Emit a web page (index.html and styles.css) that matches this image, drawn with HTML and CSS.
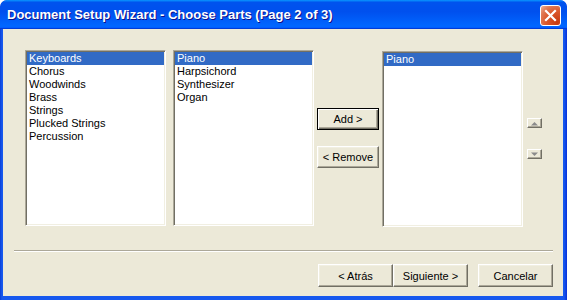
FILE: index.html
```html
<!DOCTYPE html>
<html lang="en">
<head>
  <meta charset="UTF-8">
  <meta name="viewport" content="width=device-width, initial-scale=1.0">
  <title>Document Setup Wizard</title>
  <link rel="stylesheet" href="styles.css">
</head>
<body>
  <div class="window">
    <!-- Title bar -->
    <div class="titlebar">
      <span class="title">Document Setup Wizard - Choose Parts (Page 2 of 3)</span>
      <button class="close-btn" aria-label="Close">
        <svg width="19" height="19" viewBox="0 0 19 19">
          <path d="M5 5 L14 14 M14 5 L5 14" stroke="#fff" stroke-width="2.2" stroke-linecap="square"/>
        </svg>
      </button>
    </div>

    <div class="client">
      <!-- Part pickers -->
      <div class="parts">
        <ul class="listbox">
          <li class="selected">Keyboards</li>
          <li>Chorus</li>
          <li>Woodwinds</li>
          <li>Brass</li>
          <li>Strings</li>
          <li>Plucked Strings</li>
          <li>Percussion</li>
        </ul>

        <ul class="listbox instruments">
          <li class="selected">Piano</li>
          <li>Harpsichord</li>
          <li>Synthesizer</li>
          <li>Organ</li>
        </ul>

        <div class="move-buttons">
          <button class="button default">Add &gt;</button>
          <button class="button remove-btn">&lt; Remove</button>
        </div>

        <ul class="listbox chosen">
          <li class="selected">Piano</li>
        </ul>

        <div class="order-buttons">
          <button class="arrow-btn" aria-label="Move up">
            <svg width="9" height="5" viewBox="0 0 9 5"><path d="M1 4.5 L4.5 1 L8 4.5 Z" fill="#8a8a8a"/></svg>
          </button>
          <button class="arrow-btn down-btn" aria-label="Move down">
            <svg width="9" height="5" viewBox="0 0 9 5"><path d="M1 0.5 L8 0.5 L4.5 4 Z" fill="#8a8a8a"/></svg>
          </button>
        </div>
      </div>

      <div class="separator"></div>

      <!-- Wizard navigation -->
      <div class="footer">
        <button class="button nav-btn">&lt; Atrás</button>
        <button class="button nav-btn">Siguiente &gt;</button>
        <button class="button nav-btn cancel-btn">Cancelar</button>
      </div>
    </div>
  </div>
</body>
</html>
```

FILE: styles.css
```css
/* General Styles */
body {
  margin: 0;
  padding: 0;
  width: 567px;
  height: 300px;
  overflow: hidden;
  background: #ffffff;
  font-family: 'Liberation Sans', Arial, sans-serif;
  font-size: 11px;
  color: #000;
}

.window {
  width: 567px;
  height: 300px;
  display: flex;
  flex-direction: column;
  background: linear-gradient(90deg, #0a3fd6 0, #1658ee 2px, #1658ee 564px, #0831d9 567px);
  border-radius: 7px 7px 0 0;
  overflow: hidden;
}

/* Title bar */
.titlebar {
  height: 29px;
  flex: none;
  display: flex;
  align-items: flex-start;
  padding: 0 6px 0 7px;
  background: linear-gradient(180deg, #0997ff, #0053ee 8%, #0050ee 40%, #0066ff 88%, #0066ff 93%, #005bff 95%, #003dd7 96%, #003dd7);
  border-radius: 7px 7px 0 0;
}

.title {
  margin-top: 7px;
  color: #fff;
  font-weight: bold;
  font-size: 13px;
  line-height: 16px;
  text-shadow: 1px 1px #0f1089;
  white-space: nowrap;
}

.close-btn {
  margin: 5px 0 0 auto;
  width: 21px;
  height: 21px;
  padding: 0;
  display: flex;
  align-items: center;
  justify-content: center;
  border: 1px solid #fff;
  border-radius: 3px;
  background: radial-gradient(circle at 85% 85%, #c73a10 0, #dc5a2e 50%, #e07a55 75%, #f0b49c 100%);
}

/* Dialog body */
.client {
  flex: 1;
  margin: 0 4px 4px 3px;
  padding: 21px 10px 0 11px;
  background: #ece9d8;
}

.parts {
  display: flex;
  align-items: flex-start;
  margin-left: 11px;
}

.listbox {
  width: 141px;
  height: 176px;
  box-sizing: border-box;
  margin: 0;
  padding: 1px;
  list-style: none;
  background: #fff;
  border: 1px solid;
  border-color: #aca899 #fff #fff #aca899;
  box-shadow: inset 1px 1px #716f64, inset -1px -1px #f1efe2;
}

.listbox li {
  height: 13px;
  line-height: 13px;
  padding-left: 2px;
  white-space: nowrap;
}

.listbox li.selected {
  background: #316ac5;
  color: #fff;
}

.instruments {
  margin-left: 7px;
}

.chosen {
  margin-top: 1px;
}

.move-buttons {
  width: 68px;
  box-sizing: border-box;
  padding: 58px 0 0 3px;
  display: flex;
  flex-direction: column;
}

/* Buttons */
.button {
  font-family: 'Liberation Sans', Arial, sans-serif;
  font-size: 11px;
  color: #000;
  background: #ece9d8;
  padding: 0;
  border: 1px solid;
  border-color: #fff #716f64 #716f64 #fff;
  box-shadow: inset -1px -1px #aca899, inset 1px 1px #f1efe2;
}

.move-buttons .button {
  width: 62px;
  height: 22px;
}

.button.default {
  border: 1px solid #000;
  box-shadow: inset 1px 1px #fff, inset -1px -1px #716f64, inset -2px -2px #aca899;
}

.remove-btn {
  margin-top: 16px;
}

.order-buttons {
  margin-left: 4px;
  padding-top: 68px;
  display: flex;
  flex-direction: column;
}

.arrow-btn {
  width: 15px;
  height: 10px;
  padding: 0;
  display: flex;
  align-items: center;
  justify-content: center;
  background: #ece9d8;
  border: 1px solid;
  border-color: #fff #716f64 #716f64 #fff;
  box-shadow: inset -1px -1px #aca899;
}

.down-btn {
  margin-top: 21px;
}

.separator {
  margin-top: 23px;
  border-top: 1px solid #aca899;
  border-bottom: 1px solid #fff;
}

.footer {
  margin-top: 12px;
  display: flex;
  justify-content: flex-end;
}

.nav-btn {
  width: 75px;
  height: 23px;
}

.cancel-btn {
  margin-left: 10px;
}
```
